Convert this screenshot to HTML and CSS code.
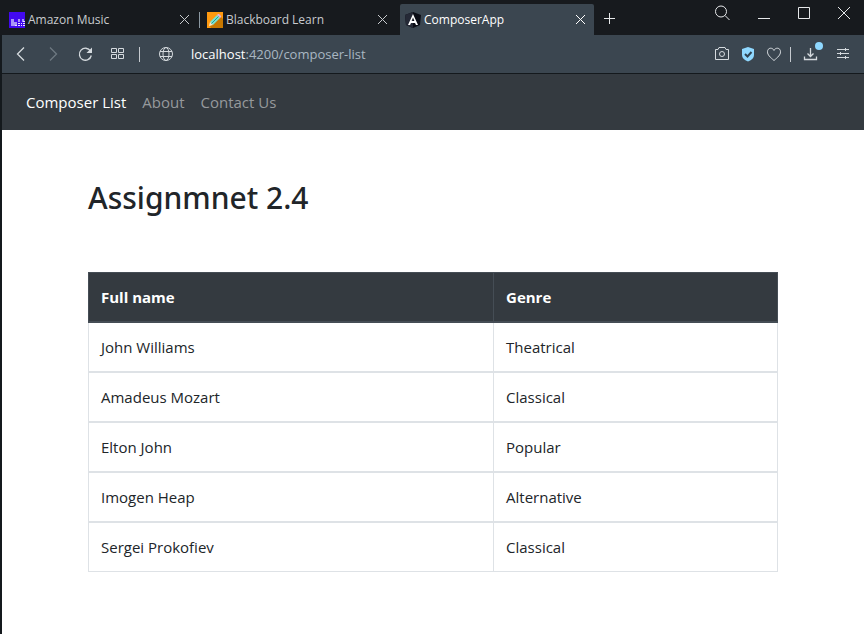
FILE: index.html
```html
<!DOCTYPE html>
<html lang="en">
<head>
<meta charset="utf-8">
<title>ComposerApp</title>
<link rel="stylesheet" href="styles.css">
</head>
<body>
<header class="browser">
  <div class="tabs">
    <div class="tab">
      <svg class="favicon" width="16" height="16" viewBox="0 0 16 16"><path fill="#4209ee" d="M0 0h16v16H0z"/><path fill="#a996f5" d="M2 7h3v7H2zM5 10h3v4H5zM9 7h2v3H9zM13 7h2v3h-2z"/><path fill="#e9e4ff" d="M6 13h2v1H6zM9 11h2v1H9zM12 11h1v1h-1zM14 9h2v1h-2zM14 11h2v1h-2zM9 13h2v1H9zM12 13h1v1h-1zM14 13h2v1h-2z"/></svg>
      <span class="tab-title">Amazon Music</span>
      <button class="close" aria-label="Close tab"><svg width="11" height="11" viewBox="0 0 11 11"><path d="M1 1l9 9M10 1l-9 9"/></svg></button>
    </div>
    <div class="tab divided">
      <svg class="favicon" width="16" height="16" viewBox="0 0 16 16"><path fill="#ff9a10" d="M0 0h16v16H0z"/><path fill="#c87800" d="M14 5l2 2v9H4l-1-2z"/><path fill="#7be3d0" d="M3 10l7-7 3 3-7 7z"/><path fill="#e3b0e0" d="M10 3l1-1h1l2 2v1l-1 1z"/><path fill="#f8e8c8" d="M3 10l3 3-4 1z"/><path stroke="#279a91" d="M4.500 11.500l7-7"/></svg>
      <span class="tab-title">Blackboard Learn</span>
      <button class="close" aria-label="Close tab"><svg width="11" height="11" viewBox="0 0 11 11"><path d="M1 1l9 9M10 1l-9 9"/></svg></button>
    </div>
    <div class="tab active">
      <svg class="favicon" width="16" height="16" viewBox="0 0 16 16"><path fill="#0b0d16" d="M8 0l8 3-1 10-7 3-7-3L0 3z"/><path fill="#252936" d="M8 0L0 3l1 10 7 3z"/><path fill="#fff" fill-rule="evenodd" d="M8 2l5 11h-2l-1-2H6l-1 2H3zM8 5.500L6.600 9h2.800z"/></svg>
      <span class="tab-title">ComposerApp</span>
      <button class="close" aria-label="Close tab"><svg width="11" height="11" viewBox="0 0 11 11"><path d="M1 1l9 9M10 1l-9 9"/></svg></button>
    </div>
    <button class="new-tab" aria-label="New tab"><svg width="12" height="12" viewBox="0 0 12 12"><path d="M5.500 0v11M0 5.500h11"/></svg></button>
    <div class="window-controls">
      <button aria-label="Search tabs"><svg width="16" height="16" viewBox="0 0 16 16"><circle cx="7" cy="6.500" r="5.500"/><path d="M11 10.500l4.500 4.500"/></svg></button>
      <button aria-label="Minimize"><svg width="12" height="12" viewBox="0 0 12 12"><path d="M0 11.500h12"/></svg></button>
      <button aria-label="Maximize"><svg width="12" height="12" viewBox="0 0 12 12"><path d="M.5.5h11v11H.5z"/></svg></button>
      <button aria-label="Close"><svg width="12" height="12" viewBox="0 0 12 12"><path d="M0 0l12 12M12 0L0 12"/></svg></button>
    </div>
  </div>
  <div class="toolbar">
    <div class="nav-buttons">
      <button aria-label="Back"><svg width="16" height="16" viewBox="0 0 16 16"><path stroke-width="1.300" d="M11 1.500L4.500 8l6.500 6.500"/></svg></button>
      <button aria-label="Forward" class="faded"><svg width="16" height="16" viewBox="0 0 16 16"><path stroke-width="1.300" d="M5 1.500L11.500 8 5 14.500"/></svg></button>
      <button aria-label="Reload"><svg width="16" height="16" viewBox="0 0 16 16"><path stroke-width="1.300" d="M14.300 9.500A6 6 0 1 1 13.500 5"/><path fill="currentColor" stroke="none" d="M15 1.500V7H9.500z"/></svg></button>
      <button aria-label="Speed dial"><svg width="16" height="16" viewBox="0 0 16 16"><path d="M2.500 2.500h5v4h-5zM9.500 2.500h5v4h-5zM2.500 8.500h5v4h-5zM9.500 8.500h5v4h-5z"/></svg></button>
    </div>
    <span class="rule"></span>
    <svg class="globe" width="16" height="16" viewBox="0 0 16 16"><circle cx="8" cy="8" r="6.500"/><ellipse cx="8" cy="8" rx="3" ry="6.500"/><path d="M2 5.500h12M2 10.500h12"/></svg>
    <div class="address"><span class="host">localhost</span>:4200/composer-list</div>
    <div class="actions">
      <button aria-label="Snapshot"><svg width="16" height="16" viewBox="0 0 16 16"><path d="M1.500 3.500H4l1-2h6l1 2h2.500v10h-13z"/><circle cx="8" cy="8" r="2.500"/></svg></button>
      <button aria-label="Tracker blocker"><svg width="16" height="16" viewBox="0 0 16 16"><path class="blue" d="M8 1l6 2v6q0 4-6 6.500Q2 13 2 9V3z"/><path class="check" d="M5 8l2.500 2.500L11.500 6"/></svg></button>
      <button aria-label="Bookmark"><svg width="16" height="16" viewBox="0 0 16 16"><path d="M8 14.500C4 11 1.500 9 1.500 5.800 1.500 1.500 6.500 1 8 4.500c1.500-3.500 6.500-3 6.500 1.300C14.500 9 12 11 8 14.500z"/></svg></button>
    </div>
    <span class="rule"></span>
    <div class="actions menu">
      <button class="download" aria-label="Downloads"><svg width="16" height="16" viewBox="0 0 16 16"><path stroke-width="1.300" d="M7.500 2v8.500M4.500 7.500l3 3 3-3M1.500 10.500v3h12v-3"/></svg><span class="dot"></span></button>
      <button aria-label="Easy setup"><svg width="16" height="16" viewBox="0 0 16 16"><path d="M2 3.500h12M2 7.500h12M2 11.500h12M10.500 2v3M5.500 6v3M10.500 10v3"/></svg></button>
    </div>
  </div>
</header>
<div class="page">
  <nav class="navbar">
    <a class="current" href="#">Composer List</a>
    <a href="#">About</a>
    <a href="#">Contact Us</a>
  </nav>
  <main class="container">
    <h1>Assignmnet 2.4</h1>
    <table>
      <thead><tr><th class="name" scope="col">Full name</th><th scope="col">Genre</th></tr></thead>
      <tbody>
        <tr><td>John Williams</td><td>Theatrical</td></tr>
        <tr><td>Amadeus Mozart</td><td>Classical</td></tr>
        <tr><td>Elton John</td><td>Popular</td></tr>
        <tr><td>Imogen Heap</td><td>Alternative</td></tr>
        <tr><td>Sergei Prokofiev</td><td>Classical</td></tr>
      </tbody>
    </table>
  </main>
</div>
</body>
</html>
```
FILE: styles.css
```css
* { box-sizing: border-box; }
body {
  margin: 0;
  min-height: 100vh;
  display: flex;
  flex-direction: column;
  background: #14191d;
  color: #212529;
  font: 15px/24px "Open Sans", "Noto Sans", sans-serif;
}
button {
  padding: 0;
  border: 0;
  background: none;
  color: inherit;
  display: flex;
}
svg {
  display: block;
  flex: none;
  fill: none;
}
button svg, .globe { stroke: currentColor; }

.tabs {
  display: flex;
  align-items: flex-end;
  height: 35px;
  padding-left: 4px;
  background: #171a1e;
  color: #e6e8ea;
}
.tab {
  display: flex;
  align-items: center;
  width: 194px;
  height: 31px;
  padding: 0 8px 0 5px;
  color: #c8cbce;
  font-size: 12px;
}
.tab.divided {
  width: 202px;
  padding: 0 12px 0 9px;
  background: linear-gradient(#8b98a2, #8b98a2) 1px center / 1px 16px no-repeat;
}
.tab.active {
  margin-right: 10px;
  border-radius: 2px 2px 0 0;
  background: #3b4650;
  color: #fff;
}
.favicon { margin-right: 3px; }
.tab-title { flex: 1; white-space: nowrap; }
.new-tab { margin-bottom: 10px; }
.window-controls {
  display: flex;
  align-items: center;
  gap: 28px;
  margin: 0 14px auto auto;
  padding-top: 5px;
}

.toolbar {
  display: flex;
  align-items: center;
  height: 38px;
  margin-left: 2px;
  padding: 0 13px 0 11px;
  background: #3b4650;
  color: #d5dade;
}
.nav-buttons { display: flex; gap: 16px; }
.faded { color: #6e7982; }
.rule {
  width: 1px;
  height: 15px;
  background: #c5cacf;
}
.nav-buttons + .rule { margin: 0 18px 0 14px; }
.address {
  flex: 1;
  margin-left: 17px;
  color: #a9b7c2;
  font-size: 13px;
}
.host { color: #fff; }
.actions {
  display: flex;
  gap: 10px;
  margin-right: 8px;
}
.menu {
  gap: 16px;
  margin: 0 0 0 12px;
}
.blue { fill: #8fd8ff; stroke: none; }
.check { stroke: #2f4352; stroke-width: 2; }
.download { position: relative; }
.dot {
  position: absolute;
  top: -4px;
  right: -4px;
  width: 8px;
  height: 8px;
  border-radius: 50%;
  background: #8fd8ff;
}

.page {
  flex: 1;
  margin: 1px 0 0 2px;
  background: #fff;
}
.navbar {
  display: flex;
  align-items: center;
  gap: 16px;
  height: 56px;
  padding: 0 24px;
  background: #343a40;
}
.navbar a { color: #96999c; text-decoration: none; }
.navbar .current { color: #fff; }
.container {
  max-width: 720px;
  margin: 0 auto;
  padding: 48px 15px;
}
h1 {
  margin: 0 0 54px;
  font-family: "Noto Sans", "Open Sans", sans-serif;
  font-size: 30px;
  font-weight: 500;
  line-height: 40px;
}
table {
  width: 100%;
  border-spacing: 0;
  table-layout: fixed;
}
th, td {
  padding: 12px;
  border: solid #dee2e6;
  border-width: 0 0 2px 1px;
  text-align: left;
}
th {
  border-color: #454d55;
  border-top-width: 1px;
  background: #343a40;
  color: #fff;
  font-weight: 700;
}
.name { width: 58.7%; }
th:last-child, td:last-child { border-right-width: 1px; }
tbody tr:last-child td { border-bottom-width: 1px; }
```
